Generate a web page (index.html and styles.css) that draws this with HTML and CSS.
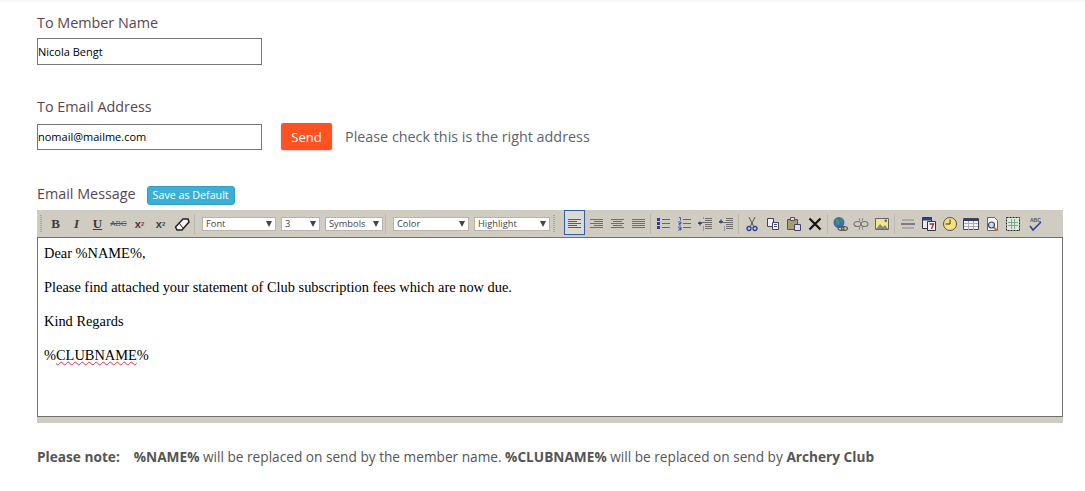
FILE: index.html
```html
<!DOCTYPE html>
<html lang="en">
<head>
  <meta charset="UTF-8">
  <title>Email Member</title>
  <link rel="stylesheet" href="styles.css">
</head>
<body>
  <svg class="sprite" xmlns="http://www.w3.org/2000/svg">
    <symbol id="i-left" viewBox="0 0 16 16"><path d="M1 3.500h13M1 5.500h9M1 7.500h13M1 9.500h9M1 11.500h13" stroke="#5c5c5c" fill="none"/></symbol>
    <symbol id="i-right" viewBox="0 0 16 16"><path d="M2 3.500h13M6 5.500h9M2 7.500h13M6 9.500h9M2 11.500h13" stroke="#6e6e6e" fill="none"/></symbol>
    <symbol id="i-center" viewBox="0 0 16 16"><path d="M2 3.500h13M4 5.500h9M2 7.500h13M4 9.500h9M2 11.500h13" stroke="#6e6e6e" fill="none"/></symbol>
    <symbol id="i-justify" viewBox="0 0 16 16"><path d="M2 3.500h13M2 5.500h13M2 7.500h13M2 9.500h13M2 11.500h13" stroke="#6e6e6e" fill="none"/></symbol>
    <symbol id="i-bullets" viewBox="0 0 16 16"><path d="M7 3.500h8M7 7.500h8M7 11.500h8" stroke="#666" stroke-width="1.200" fill="none"/><path d="M2 2h3v3H2zM2 6h3v3H2zM2 10h3v3H2z" fill="#2b3f9e"/></symbol>
    <symbol id="i-numbers" viewBox="0 0 16 16"><path d="M7 3.500h8M7 7.500h8M7 11.500h8" stroke="#666" stroke-width="1.200" fill="none"/><path d="M3 1.500h1.500v3M2 6h3v1.500H3V9h2M2 11h3v1.500H3m2 0V14H2" stroke="#2b3f9e" fill="none" stroke-width=".8"/></symbol>
    <symbol id="i-outdent" viewBox="0 0 16 16"><path d="M8 2.500h7M8 4.500h7M1 6.500h14M8 8.500h7M8 10.500h7M8 12.500h7" stroke="#6e6e6e" fill="none"/><path d="M6.500 1v2M6.500 10v5" stroke="#999"/><path d="M1 7.500h4M3 5.500v4" stroke="#2b3f9e" fill="none" stroke-width="1.200"/></symbol>
    <symbol id="i-indent" viewBox="0 0 16 16"><path d="M8 2.500h7M8 4.500h7M1 6.500h14M8 8.500h7M8 10.500h7M8 12.500h7" stroke="#6e6e6e" fill="none"/><path d="M6.500 10v5" stroke="#999"/><path d="M1 5.500h4M3 3.500v4" stroke="#2b3f9e" fill="none" stroke-width="1.200"/></symbol>
    <symbol id="i-cut" viewBox="0 0 16 16"><path d="M5 1l4.500 9M11 1l-4.500 9" stroke="#555" fill="none"/><circle cx="5" cy="12.500" r="2" fill="none" stroke="#2b3f9e" stroke-width="1.300"/><circle cx="11" cy="12.500" r="2" fill="none" stroke="#2b3f9e" stroke-width="1.300"/></symbol>
    <symbol id="i-copy" viewBox="0 0 16 16"><path d="M2.500 2.500h6v8h-6z" fill="#eef" stroke="#445"/><path d="M7.500 6.500h6v7h-6z" fill="#eef" stroke="#445"/><path d="M9 8.500h3M9 10.500h3" stroke="#557"/></symbol>
    <symbol id="i-paste" viewBox="0 0 16 16"><path d="M1.500 3.500h10v10h-10z" fill="#a89c70" stroke="#555"/><path d="M4.500 1.500h4v3h-4z" fill="#ddd" stroke="#555"/><path d="M8.500 8.500h6v6h-6z" fill="#dde" stroke="#446"/></symbol>
    <symbol id="i-delete" viewBox="0 0 16 16"><path d="M2.500 2.500l11 11M13.500 2.500l-11 11" stroke="#111" stroke-width="2.200" fill="none"/></symbol>
    <symbol id="i-link" viewBox="0 0 16 16"><circle cx="7" cy="6.500" r="5.500" fill="#3a6fb5"/><path d="M4 3l3 1 1 3-3 2-1-3zM8 1.500l3 2-1 2z" fill="#4d9a45"/><ellipse cx="9" cy="12.500" rx="3" ry="1.800" fill="none" stroke="#555" stroke-width="1.200"/><ellipse cx="12.500" cy="12.500" rx="3" ry="1.800" fill="none" stroke="#555" stroke-width="1.200"/></symbol>
    <symbol id="i-unlink" viewBox="0 0 16 16"><ellipse cx="4.500" cy="8" rx="3.500" ry="2.500" fill="none" stroke="#777" stroke-width="1.200"/><ellipse cx="11.500" cy="8" rx="3.500" ry="2.500" fill="none" stroke="#777" stroke-width="1.200"/><path d="M6 2l1 3M10 2L9 5M6 14l1-3M10 14l-1-3" stroke="#888" fill="none"/></symbol>
    <symbol id="i-image" viewBox="0 0 16 16"><path d="M1.500 2.500h13v11h-13z" fill="#f1e68c" stroke="#666"/><path d="M2 13l4-5 3 3 2-2 3 4z" fill="#8a8a7a"/><rect x="10.500" y="3.500" width="2.500" height="2.500" fill="#777"/></symbol>
    <symbol id="i-rule" viewBox="0 0 16 16"><path d="M2 4h12M2 12h12" stroke="#aaa" stroke-width="2" fill="none"/><path d="M1 8h14" stroke="#666" stroke-width="1.500"/></symbol>
    <symbol id="i-date" viewBox="0 0 16 16"><path d="M1.500 1.500h9v11h-9z" fill="#e8e8ee" stroke="#334"/><path d="M1.500 1.500h9v3h-9z" fill="#2b3f7e"/><path d="M6.500 5.500h8v9h-8z" fill="#f4f4f4" stroke="#334"/><path d="M8.500 8h4l-2 5" stroke="#b02020" stroke-width="1.300" fill="none"/></symbol>
    <symbol id="i-time" viewBox="0 0 16 16"><circle cx="8" cy="8" r="6.500" fill="#f5e27a" stroke="#555"/><path d="M8 8V3.500M8 8H3.500" stroke="#333" fill="none"/></symbol>
    <symbol id="i-table" viewBox="0 0 16 16"><path d="M.500 2.500h15v11H.500z" fill="#f4f4f4" stroke="#445"/><path d="M1 3h14v2H1z" fill="#2b3f7e"/><path d="M1 7.500h14M1 10.500h14M5.500 5v9M10.500 5v9" stroke="#aab" fill="none"/></symbol>
    <symbol id="i-preview" viewBox="0 0 16 16"><path d="M3.500 1.500h7l3 3v10h-10z" fill="#f7f7f7" stroke="#667"/><circle cx="7.500" cy="9" r="3" fill="#cde" stroke="#446" stroke-width="1.200"/><path d="M10 11.500l3 3" stroke="#c77a20" stroke-width="2"/></symbol>
    <symbol id="i-full" viewBox="0 0 16 16"><path d="M1.500 1.500h13v13h-13z" fill="#dfe8dc" stroke="#222" stroke-dasharray="2 1"/><path d="M3 6.500h10M3 9.500h10M6.500 3v10M9.500 3v10" stroke="#7a9" fill="none"/></symbol>
    <symbol id="i-spell" viewBox="0 0 16 16"><text x="3" y="6" font-family="Liberation Sans" font-size="5" font-weight="700" fill="#555">ABC</text><path d="M3 10l3 4 8-8" stroke="#2b3f9e" stroke-width="1.500" fill="none"/></symbol>
  </svg>

  <div class="topline"></div>

  <div class="page">
    <label class="field-label" for="member">To Member Name</label>
    <input class="text-input member-input" id="member" type="text" value="Nicola Bengt">

    <label class="field-label email-label" for="email">To Email Address</label>
    <div class="email-row">
      <input class="text-input" id="email" type="text" value="nomail@mailme.com">
      <button class="send-btn">Send</button>
      <span class="hint">Please check this is the right address</span>
    </div>

    <div class="message-head">
      <span class="field-label">Email Message</span>
      <button class="default-btn">Save as Default</button>
    </div>

    <div class="editor">
      <div class="toolbar">
        <span class="grip"></span>
        <span class="tool tool-text bold">B</span>
        <span class="tool tool-text italic">I</span>
        <span class="tool tool-text underline">U</span>
        <span class="tool tool-text strike">ABC</span>
        <span class="tool tool-text script">x<sup>2</sup></span>
        <span class="tool tool-text script">x<sub>2</sub></span>
        <span class="tool"><svg class="eraser" viewBox="0 0 16 16"><path d="M1.500 11L9 3h5l1 3-7 8H3z" fill="#f4f4f4" stroke="#222" stroke-width="1.500"/><path d="M5 7l4 5" stroke="#222"/></svg></span>
        <span class="sep sep-first"></span>
        <div class="pick pick-font"><span>Font</span><i></i></div>
        <div class="pick pick-size"><span>3</span><i></i></div>
        <div class="pick pick-symbols"><span>Symbols</span><i></i></div>
        <span class="sep sep-wide"></span>
        <div class="pick pick-color"><span>Color</span><i></i></div>
        <div class="pick pick-highlight"><span>Highlight</span><i></i></div>
        <span class="grip grip-mid"></span>
        <span class="tool active"><svg><use href="#i-left"/></svg></span>
        <span class="tool"><svg><use href="#i-right"/></svg></span>
        <span class="tool"><svg><use href="#i-center"/></svg></span>
        <span class="tool"><svg><use href="#i-justify"/></svg></span>
        <span class="sep sep-tight"></span>
        <span class="tool"><svg><use href="#i-bullets"/></svg></span>
        <span class="tool"><svg><use href="#i-numbers"/></svg></span>
        <span class="tool"><svg><use href="#i-outdent"/></svg></span>
        <span class="tool"><svg><use href="#i-indent"/></svg></span>
        <span class="sep"></span>
        <span class="tool"><svg><use href="#i-cut"/></svg></span>
        <span class="tool"><svg><use href="#i-copy"/></svg></span>
        <span class="tool"><svg><use href="#i-paste"/></svg></span>
        <span class="tool"><svg><use href="#i-delete"/></svg></span>
        <span class="sep sep-tight"></span>
        <span class="tool"><svg><use href="#i-link"/></svg></span>
        <span class="tool"><svg><use href="#i-unlink"/></svg></span>
        <span class="tool"><svg><use href="#i-image"/></svg></span>
        <span class="sep"></span>
        <span class="tool"><svg><use href="#i-rule"/></svg></span>
        <span class="tool"><svg><use href="#i-date"/></svg></span>
        <span class="tool"><svg><use href="#i-time"/></svg></span>
        <span class="tool"><svg><use href="#i-table"/></svg></span>
        <span class="tool"><svg><use href="#i-preview"/></svg></span>
        <span class="tool"><svg><use href="#i-full"/></svg></span>
        <span class="tool tool-last"><svg><use href="#i-spell"/></svg></span>
      </div>
      <div class="editor-body">
        <p>Dear %NAME%,</p>
        <p>Please find attached your statement of Club subscription fees which are now due.</p>
        <p>Kind Regards</p>
        <p>%<span class="misspelt">CLUBNAME</span>%</p>
      </div>
      <div class="editor-foot"></div>
    </div>

    <p class="note"><b>Please note:</b><span class="note-gap"></span><b>%NAME%</b> will be replaced on send by the member name. <b>%CLUBNAME%</b> will be replaced on send by <b>Archery Club</b></p>
  </div>
</body>
</html>
```

FILE: styles.css
```css
body {
  margin: 0;
  font-family: "Open Sans", sans-serif;
  background-color: #ffffff;
  color: #555;
}

.sprite {
  display: none;
}

.topline {
  height: 2px;
  background-color: #f8f8f8;
}

.page {
  padding: 11px 22px 0 37px;
}

.field-label {
  display: block;
  font-size: 14.35px;
  line-height: 19px;
  color: #5a4650;
}

.text-input {
  display: block;
  box-sizing: border-box;
  width: 225px;
  height: 26px;
  margin: 0;
  padding: 0;
  border: 1px solid #767676;
  border-radius: 0;
  font-family: "Open Sans", sans-serif;
  font-size: 11px;
  color: #000;
  background: #fff;
}

.member-input {
  height: 27px;
  margin-top: 6px;
}

.email-label {
  margin-top: 32px;
}

.email-row {
  display: flex;
  align-items: center;
  margin-top: 7px;
}

.send-btn {
  width: 51px;
  height: 27px;
  margin-left: 19px;
  padding: 0;
  border: none;
  border-radius: 2px;
  background-color: #ff5122;
  color: #fff;
  font-family: "Open Sans", sans-serif;
  font-size: 13px;
  box-shadow: 0 1px 2px rgba(0, 0, 0, 0.2);
}

.hint {
  margin-left: 13px;
  font-size: 14.35px;
  color: #5c6470;
}

.message-head {
  display: flex;
  align-items: flex-start;
  gap: 11px;
  margin-top: 36px;
}

.message-head .field-label {
  margin-top: -2px;
}

.default-btn {
  width: 88px;
  height: 19px;
  padding: 0;
  border: 1px solid #2f9fc4;
  border-radius: 3px;
  background-color: #3cafd4;
  color: #fff;
  font-family: "Open Sans", sans-serif;
  font-size: 10.7px;
  line-height: 17px;
}

.editor {
  margin-top: 5px;
}

.toolbar {
  display: flex;
  align-items: center;
  height: 27px;
  padding-left: 3px;
  box-sizing: border-box;
  background-color: #d0ccc2;
}

.grip {
  width: 2px;
  height: 17px;
  margin-right: 3px;
  background-image: linear-gradient(#aaa69c 50%, transparent 50%);
  background-size: 2px 2px;
}

.grip-mid {
  margin: 0 9px 0 3px;
}

.sep {
  width: 1px;
  height: 20px;
  margin: 0 2px;
  background-color: #bdb9ae;
}

.sep-wide {
  margin: 0 7px 0 2px;
}

.sep-tight {
  margin-right: 1px;
}

.tool {
  display: flex;
  align-items: center;
  justify-content: center;
  box-sizing: border-box;
  width: 21px;
  height: 25px;
  flex: none;
}

.tool svg {
  width: 16px;
  height: 16px;
}

.tool-last {
  margin-left: 1px;
}

.tool.active {
  margin-bottom: 2px;
  padding-top: 2px;
  border: 1px solid #2f5fa8;
  background-color: #dcdad3;
}

.tool-text {
  font-family: "Liberation Serif", serif;
  font-size: 13px;
  font-weight: 700;
  color: #3c3c3c;
}

.italic {
  font-style: italic;
}

.underline {
  text-decoration: underline;
}

.strike {
  font-family: "Liberation Sans", sans-serif;
  font-size: 8px;
  font-weight: 400;
  color: #555;
  text-decoration: line-through;
}

.script {
  font-family: "Liberation Sans", sans-serif;
  font-size: 11px;
}

.script sup,
.script sub {
  font-size: 6px;
  line-height: 0;
  color: #a33;
}

.script sub {
  color: #446;
}

.pick {
  display: flex;
  align-items: center;
  justify-content: space-between;
  box-sizing: border-box;
  height: 14px;
  padding: 0 3px;
  background-color: #fff;
  border: 1px solid #b8b4aa;
  font-size: 9.3px;
  color: #444;
}

.pick i {
  width: 0;
  height: 0;
  border-left: 3px solid transparent;
  border-right: 3px solid transparent;
  border-top: 6px solid #444;
}

.pick-font {
  width: 74px;
  margin-left: 5px;
}

.pick-size {
  width: 39px;
  margin-left: 5px;
}

.pick-symbols {
  width: 58px;
  margin-left: 5px;
}

.pick-color {
  width: 76px;
}

.pick-highlight {
  width: 76px;
  margin-left: 5px;
}

.editor-body {
  box-sizing: border-box;
  height: 180px;
  padding: 7px 6px;
  border: 1px solid #707070;
  font-family: "Liberation Serif", serif;
  font-size: 14.4px;
  line-height: 17px;
  color: #000;
  overflow: hidden;
}

.editor-body p {
  margin: 0 0 17px;
}

.misspelt {
  text-decoration: underline wavy #e03050 1px;
}

.editor-foot {
  height: 6px;
  background-color: #d0ccc2;
}

.note {
  margin: 24px 0 0;
  font-size: 13.67px;
  line-height: 19px;
  color: #555;
}

.note-gap {
  display: inline-block;
  width: 14px;
}
```
